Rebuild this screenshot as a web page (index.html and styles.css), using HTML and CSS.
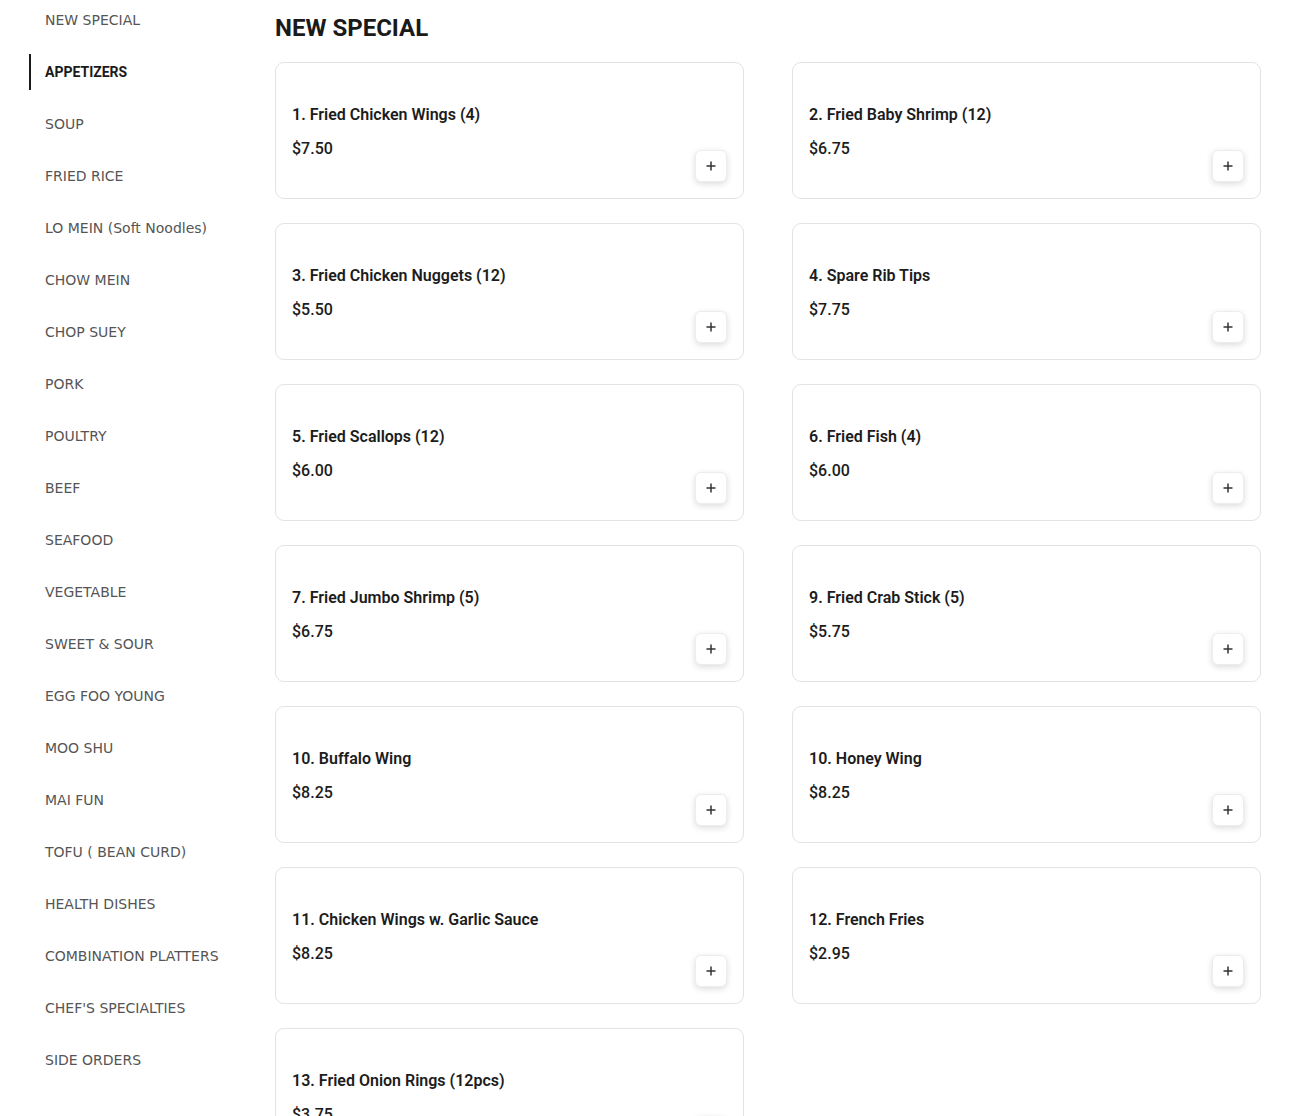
FILE: index.html
```html
<!DOCTYPE html>
<html>
<head>
<meta charset="utf-8">
<link rel="stylesheet" href="styles.css">
</head>
<body>
<div class="page">
  <nav class="sidebar">
    <a class="nav-item">NEW SPECIAL</a>
    <a class="nav-item active">APPETIZERS</a>
    <a class="nav-item">SOUP</a>
    <a class="nav-item">FRIED RICE</a>
    <a class="nav-item">LO MEIN (Soft Noodles)</a>
    <a class="nav-item">CHOW MEIN</a>
    <a class="nav-item">CHOP SUEY</a>
    <a class="nav-item">PORK</a>
    <a class="nav-item">POULTRY</a>
    <a class="nav-item">BEEF</a>
    <a class="nav-item">SEAFOOD</a>
    <a class="nav-item">VEGETABLE</a>
    <a class="nav-item">SWEET &amp; SOUR</a>
    <a class="nav-item">EGG FOO YOUNG</a>
    <a class="nav-item">MOO SHU</a>
    <a class="nav-item">MAI FUN</a>
    <a class="nav-item">TOFU ( BEAN CURD)</a>
    <a class="nav-item">HEALTH DISHES</a>
    <a class="nav-item">COMBINATION PLATTERS</a>
    <a class="nav-item">CHEF'S SPECIALTIES</a>
    <a class="nav-item">SIDE ORDERS</a>
  </nav>
  <main class="content">
    <h2 class="section-title">NEW SPECIAL</h2>
    <div class="grid">
      <div class="card"><div class="info"><div class="name">1. Fried Chicken Wings (4)</div><div class="price">$7.50</div></div><button class="add"><svg viewBox="0 0 12 12" width="12" height="12"><path d="M6 1.5v9M1.5 6h9" stroke="#333" stroke-width="1.5" fill="none"/></svg></button></div>
      <div class="card"><div class="info"><div class="name">2. Fried Baby Shrimp (12)</div><div class="price">$6.75</div></div><button class="add"><svg viewBox="0 0 12 12" width="12" height="12"><path d="M6 1.5v9M1.5 6h9" stroke="#333" stroke-width="1.5" fill="none"/></svg></button></div>
      <div class="card"><div class="info"><div class="name">3. Fried Chicken Nuggets (12)</div><div class="price">$5.50</div></div><button class="add"><svg viewBox="0 0 12 12" width="12" height="12"><path d="M6 1.5v9M1.5 6h9" stroke="#333" stroke-width="1.5" fill="none"/></svg></button></div>
      <div class="card"><div class="info"><div class="name">4. Spare Rib Tips</div><div class="price">$7.75</div></div><button class="add"><svg viewBox="0 0 12 12" width="12" height="12"><path d="M6 1.5v9M1.5 6h9" stroke="#333" stroke-width="1.5" fill="none"/></svg></button></div>
      <div class="card"><div class="info"><div class="name">5. Fried Scallops (12)</div><div class="price">$6.00</div></div><button class="add"><svg viewBox="0 0 12 12" width="12" height="12"><path d="M6 1.5v9M1.5 6h9" stroke="#333" stroke-width="1.5" fill="none"/></svg></button></div>
      <div class="card"><div class="info"><div class="name">6. Fried Fish (4)</div><div class="price">$6.00</div></div><button class="add"><svg viewBox="0 0 12 12" width="12" height="12"><path d="M6 1.5v9M1.5 6h9" stroke="#333" stroke-width="1.5" fill="none"/></svg></button></div>
      <div class="card"><div class="info"><div class="name">7. Fried Jumbo Shrimp (5)</div><div class="price">$6.75</div></div><button class="add"><svg viewBox="0 0 12 12" width="12" height="12"><path d="M6 1.5v9M1.5 6h9" stroke="#333" stroke-width="1.5" fill="none"/></svg></button></div>
      <div class="card"><div class="info"><div class="name">9. Fried Crab Stick (5)</div><div class="price">$5.75</div></div><button class="add"><svg viewBox="0 0 12 12" width="12" height="12"><path d="M6 1.5v9M1.5 6h9" stroke="#333" stroke-width="1.5" fill="none"/></svg></button></div>
      <div class="card"><div class="info"><div class="name">10. Buffalo Wing</div><div class="price">$8.25</div></div><button class="add"><svg viewBox="0 0 12 12" width="12" height="12"><path d="M6 1.5v9M1.5 6h9" stroke="#333" stroke-width="1.5" fill="none"/></svg></button></div>
      <div class="card"><div class="info"><div class="name">10. Honey Wing</div><div class="price">$8.25</div></div><button class="add"><svg viewBox="0 0 12 12" width="12" height="12"><path d="M6 1.5v9M1.5 6h9" stroke="#333" stroke-width="1.5" fill="none"/></svg></button></div>
      <div class="card"><div class="info"><div class="name">11. Chicken Wings w. Garlic Sauce</div><div class="price">$8.25</div></div><button class="add"><svg viewBox="0 0 12 12" width="12" height="12"><path d="M6 1.5v9M1.5 6h9" stroke="#333" stroke-width="1.5" fill="none"/></svg></button></div>
      <div class="card"><div class="info"><div class="name">12. French Fries</div><div class="price">$2.95</div></div><button class="add"><svg viewBox="0 0 12 12" width="12" height="12"><path d="M6 1.5v9M1.5 6h9" stroke="#333" stroke-width="1.5" fill="none"/></svg></button></div>
      <div class="card"><div class="info"><div class="name">13. Fried Onion Rings (12pcs)</div><div class="price">$3.75</div></div><button class="add"><svg viewBox="0 0 12 12" width="12" height="12"><path d="M6 1.5v9M1.5 6h9" stroke="#333" stroke-width="1.5" fill="none"/></svg></button></div>
    </div>
  </main>
</div>
</body>
</html>
```
FILE: styles.css
```css
html, body {
  margin: 0;
  padding: 0;
  background: #ffffff;
}

.page {
  display: flex;
  align-items: flex-start;
}

.sidebar {
  width: 246px;
  padding: 2px 0 0 29px;
  display: flex;
  flex-direction: column;
  gap: 16px;
  flex-shrink: 0;
}

.nav-item {
  display: flex;
  align-items: center;
  height: 36px;
  padding-left: 14px;
  border-left: 2px solid transparent;
  font-family: "DejaVu Sans", sans-serif;
  font-size: 14px;
  color: #555555;
  white-space: nowrap;
}

.nav-item.active {
  border-left-color: #1a1a1a;
  font-family: Roboto, sans-serif;
  font-weight: 700;
  color: #1a1a1a;
}

.content {
  width: 986px;
  padding-top: 12px;
}

.section-title {
  margin: 0 0 18px 0;
  font-family: Roboto, sans-serif;
  font-weight: 700;
  font-size: 24px;
  line-height: 32px;
  color: #1a1a1a;
}

.grid {
  display: grid;
  grid-template-columns: 1fr 1fr;
  column-gap: 48px;
  row-gap: 24px;
}

.card {
  box-sizing: border-box;
  height: 137px;
  border: 1px solid #e3e3e3;
  border-radius: 9px;
  padding: 16px;
  display: flex;
  justify-content: space-between;
  align-items: flex-end;
  background: #fff;
}

.info {
  align-self: flex-start;
  padding-top: 24px;
  font-family: Roboto, sans-serif;
  color: #1c1c1c;
}

.name {
  font-size: 16px;
  line-height: 24px;
  font-weight: 600;
  margin-bottom: 10px;
}

.price {
  font-size: 16px;
  line-height: 24px;
  font-weight: 500;
}

.add {
  width: 32px;
  height: 32px;
  padding: 0;
  border: 1px solid #ededed;
  border-radius: 6px;
  background: #fff;
  box-shadow: 0 2px 6px rgba(0, 0, 0, 0.14);
  display: flex;
  align-items: center;
  justify-content: center;
  flex-shrink: 0;
}

.add svg {
  display: block;
}
```
